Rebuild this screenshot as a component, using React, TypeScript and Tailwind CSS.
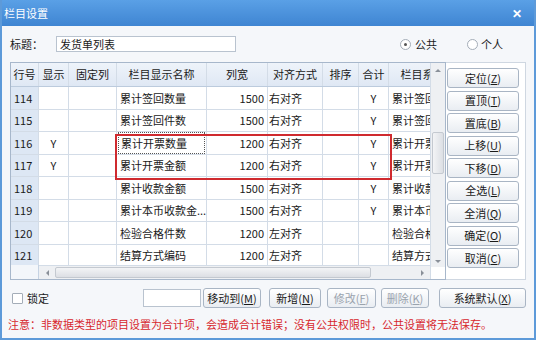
import React from "react";

interface Row {
  no: string;
  show: string;
  name: string;
  width: string;
  align: string;
  sum: string;
  sys: string;
}

const rows: Row[] = [
  { no: "114", show: "", name: "累计签回数量", width: "1500", align: "右对齐", sum: "Y", sys: "累计签回数量" },
  { no: "115", show: "", name: "累计签回件数", width: "1500", align: "右对齐", sum: "Y", sys: "累计签回件数" },
  { no: "116", show: "Y", name: "累计开票数量", width: "1200", align: "右对齐", sum: "Y", sys: "累计开票数量" },
  { no: "117", show: "Y", name: "累计开票金额", width: "1200", align: "右对齐", sum: "Y", sys: "累计开票金额" },
  { no: "118", show: "", name: "累计收款金额", width: "1500", align: "右对齐", sum: "Y", sys: "累计收款金额" },
  { no: "119", show: "", name: "累计本币收款金...", width: "1500", align: "右对齐", sum: "Y", sys: "累计本币收款金额" },
  { no: "120", show: "", name: "检验合格件数", width: "1200", align: "左对齐", sum: "", sys: "检验合格件数" },
  { no: "121", show: "", name: "结算方式编码", width: "1200", align: "左对齐", sum: "", sys: "结算方式编码" },
];

const sideButtons = [
  ["定位", "Z"],
  ["置顶", "T"],
  ["置底", "B"],
  ["上移", "U"],
  ["下移", "D"],
  ["全选", "L"],
  ["全消", "Q"],
  ["确定", "O"],
  ["取消", "C"],
];

function Btn({ label, hot, className = "", disabled = false }: { label: string; hot: string; className?: string; disabled?: boolean }) {
  return (
    <button
      className={`h-[20px] rounded-[3px] border border-[#a9b5c4] bg-gradient-to-b from-[#ffffff] to-[#e9edf2] text-[11px] leading-none ${
        disabled ? "text-[#9aa3ad]" : "text-[#1a1a1a]"
      } ${className}`}
    >
      {label}(<span className="underline">{hot}</span>)
    </button>
  );
}

const cell = "h-full flex items-center border-r border-[#d3dce7] shrink-0";

export default function App() {
  return (
    <div
      className="w-[536px] h-[340px] flex flex-col bg-[#f5f7fa] border-x-2 border-b-2 border-[#5d9ad9] text-[#1a1a1a] overflow-hidden"
      style={{ fontFamily: '"Noto Sans CJK SC", "Noto Sans", sans-serif' }}
    >
      {/* title bar */}
      <div className="h-[26px] -mx-[2px] flex items-center justify-between px-[4px] bg-gradient-to-b from-[#5aa0e6] to-[#3f85d2] text-white shrink-0">
        <span className="text-[11px]">栏目设置</span>
        <span className="mr-[10px] text-[12px] font-bold leading-none">✕</span>
      </div>

      {/* caption row */}
      <div className="h-[36px] flex items-center shrink-0 text-[11px]">
        <span className="ml-[8px]">标题：</span>
        <div className="ml-[13px] w-[180px] h-[16px] border border-[#b9c3cf] bg-white flex items-center px-[3px]">发货单列表</div>
        <div className="ml-auto flex items-center">
          <span className="w-[11px] h-[11px] rounded-full border border-[#a4adb8] bg-white flex items-center justify-center">
            <span className="w-[3px] h-[3px] rounded-full bg-[#555]" />
          </span>
          <span className="ml-[4px]">公共</span>
          <span className="ml-[30px] w-[11px] h-[11px] rounded-full border border-[#a4adb8] bg-white" />
          <span className="ml-[3px] mr-[31px]">个人</span>
        </div>
      </div>

      {/* main area */}
      <div className="flex shrink-0 ml-[8px]">
        <div className="relative w-[436px] h-[218px] border border-[#a7b7cb] bg-white flex text-[11px]">
          <div className="w-[419px] flex flex-col overflow-hidden">
            {/* header */}
            <div className="h-[24px] flex shrink-0 bg-gradient-to-b from-[#eef3fa] to-[#dfe8f4] border-b border-[#bccbdd]">
              <div className={`${cell} w-[28px] justify-center border-[#c6d3e3]`}>行号</div>
              <div className={`${cell} w-[30px] justify-center border-[#c6d3e3]`}>显示</div>
              <div className={`${cell} w-[48px] justify-center border-[#c6d3e3]`}>固定列</div>
              <div className={`${cell} w-[90px] justify-center border-[#c6d3e3]`}>栏目显示名称</div>
              <div className={`${cell} w-[61px] justify-center border-[#c6d3e3]`}>列宽</div>
              <div className={`${cell} w-[55px] justify-center border-[#c6d3e3]`}>对齐方式</div>
              <div className={`${cell} w-[36px] justify-center border-[#c6d3e3]`}>排序</div>
              <div className={`${cell} w-[30px] justify-center border-[#c6d3e3]`}>合计</div>
              <div className={`${cell} w-[90px] justify-center border-[#c6d3e3]`}>栏目系统名称</div>
            </div>
            {/* body */}
            <div className="h-[178px] overflow-hidden shrink-0">
              {rows.map((r) => (
                <div key={r.no} className="h-[22.5px] flex border-b border-[#d3dce7] whitespace-nowrap">
                  <div className={`${cell} w-[28px] pl-[3px] bg-[#dde7f4] border-[#c6d3e3]`}>{r.no}</div>
                  <div className={`${cell} w-[30px] justify-center`}>{r.show}</div>
                  <div className={`${cell} w-[48px]`} />
                  <div className={`${cell} w-[90px] px-[1px]`}>
                    <div
                      className={`h-full w-full flex items-center pl-[2px] ${
                        r.no === "116" ? "border border-dotted border-[#555]" : ""
                      }`}
                    >
                      {r.name}
                    </div>
                  </div>
                  <div className={`${cell} w-[61px] justify-end pr-[3px]`}>{r.width}</div>
                  <div className={`${cell} w-[55px] pl-[1px]`}>{r.align}</div>
                  <div className={`${cell} w-[36px]`} />
                  <div className={`${cell} w-[30px] justify-center`}>{r.sum}</div>
                  <div className={`${cell} w-[90px] pl-[3px]`}>{r.sys}</div>
                </div>
              ))}
            </div>
            {/* horizontal scrollbar */}
            <div className="h-[14px] flex shrink-0">
              <div className="w-[28px] bg-[#f3f6fa] border-r border-[#c6d3e3]" />
              <div className="flex-1 flex items-center bg-[#eef0f3] border-t border-[#d3dce7]">
                <span className="w-[16px] flex justify-center">
                  <span className="w-0 h-0 border-y-[3px] border-y-transparent border-r-[3px] border-r-[#8a9099]" />
                </span>
                <div className="w-[316px] h-[11px] rounded-[2px] border border-[#c4c9d0] bg-gradient-to-b from-[#f3f4f6] to-[#dcdfe4]" />
                <span className="ml-auto w-[16px] flex justify-center">
                  <span className="w-0 h-0 border-y-[3px] border-y-transparent border-l-[3px] border-l-[#8a9099]" />
                </span>
              </div>
            </div>
          </div>
          {/* vertical scrollbar */}
          <div className="w-[15px] flex flex-col bg-[#eef0f3] border-l border-[#d3dce7]">
            <span className="h-[14px] flex items-center justify-center">
              <span className="w-0 h-0 border-x-[3px] border-x-transparent border-b-[3px] border-b-[#8a9099]" />
            </span>
            <div className="mt-[55px] mx-[1px] h-[42px] rounded-[2px] border border-[#c4c9d0] bg-gradient-to-r from-[#f3f4f6] to-[#dcdfe4]" />
            <span className="mt-[81px] h-[12px] flex items-center justify-center">
              <span className="w-0 h-0 border-x-[3px] border-x-transparent border-t-[3px] border-t-[#8a9099]" />
            </span>
            <div className="flex-1 bg-white" />
          </div>
          {/* highlight box */}
          <div className="absolute left-[104px] top-[71px] w-[277px] h-[46px] border-[2.5px] border-[#cf2a2f] pointer-events-none" />
        </div>

        {/* side buttons */}
        <div className="w-[80px] h-[218px] border border-l-0 border-[#cfd7e1] bg-white flex flex-col gap-[2.5px] pt-[5px] pl-[1px]">
          {sideButtons.map(([l, h]) => (
            <Btn key={l} label={l} hot={h} className="w-[72px]" />
          ))}
        </div>
      </div>

      {/* bottom controls */}
      <div className="mt-[9px] h-[18px] flex items-center text-[11px] shrink-0">
        <span className="ml-[10px] w-[11px] h-[11px] border border-[#a4adb8] bg-white rounded-[1px]" />
        <span className="ml-[4px]">锁定</span>
        <div className="ml-[94px] w-[58px] h-[18px] border border-[#b9c3cf] bg-white" />
        <Btn label="移动到" hot="M" className="ml-[2px] w-[58px] h-[19px]" />
        <Btn label="新增" hot="N" className="ml-[8px] w-[52px] h-[19px]" />
        <Btn label="修改" hot="F" className="ml-[6px] w-[49px] h-[19px]" disabled />
        <Btn label="删除" hot="K" className="ml-[5px] w-[48px] h-[19px]" disabled />
        <Btn label="系统默认" hot="X" className="ml-[10px] w-[87px] h-[19px]" />
      </div>

      {/* warning */}
      <div className="mt-[9px] ml-[6px] text-[11px] text-[#d7262c] whitespace-nowrap">
        注意：非数据类型的项目设置为合计项，会造成合计错误；没有公共权限时，公共设置将无法保存。
      </div>
    </div>
  );
}
